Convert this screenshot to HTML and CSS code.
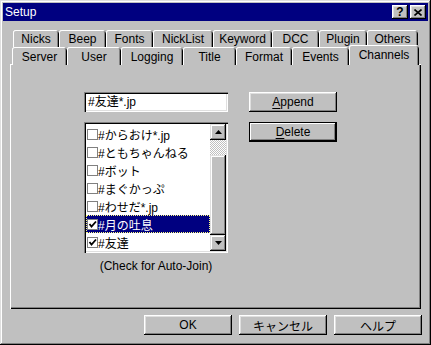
FILE: index.html
```html
<!DOCTYPE html>
<html lang="ja">
<head>
    <meta charset="UTF-8">
    <meta name="viewport" content="width=device-width, initial-scale=1.0">
    <title>Setup</title>
    <link rel="stylesheet" href="styles.css">
</head>
<body>

    <div class="dialog">
        <div class="titlebar">
            <span class="title">Setup</span>
            <div class="caption-buttons">
                <button class="cap-btn cap-help">?</button>
                <button class="cap-btn cap-close">
                    <svg width="8" height="7" viewBox="0 0 8 7"><path d="M0.5 0.5 L7.5 6.5 M7.5 0.5 L0.5 6.5" stroke="#000" stroke-width="1.6" fill="none"/></svg>
                </button>
            </div>
        </div>

        <div class="dialog-body">
            <div class="tabs">
                <div class="tab-row row-back">
                    <div class="tab">Nicks</div>
                    <div class="tab">Beep</div>
                    <div class="tab">Fonts</div>
                    <div class="tab">NickList</div>
                    <div class="tab">Keyword</div>
                    <div class="tab">DCC</div>
                    <div class="tab">Plugin</div>
                    <div class="tab">Others</div>
                </div>
                <div class="tab-row row-front">
                    <div class="tab">Server</div>
                    <div class="tab">User</div>
                    <div class="tab">Logging</div>
                    <div class="tab">Title</div>
                    <div class="tab">Format</div>
                    <div class="tab">Events</div>
                    <div class="tab active">Channels</div>
                </div>
            </div>

            <div class="panel">
                <div class="channel-col">
                    <div class="field">#友達*.jp</div>

                    <div class="listbox">
                        <ul class="items">
                            <li class="item"><span class="check"></span>#からおけ*.jp</li>
                            <li class="item"><span class="check"></span>#ともちゃんねる</li>
                            <li class="item"><span class="check"></span>#ボット</li>
                            <li class="item"><span class="check"></span>#まぐかっぷ</li>
                            <li class="item"><span class="check"></span>#わせだ*.jp</li>
                            <li class="item selected"><span class="check checked"><svg width="9" height="9" viewBox="0 0 9 9"><path d="M1.5 4 L3.5 6.5 L8 1.5" stroke="#000" stroke-width="1.8" fill="none"/></svg></span>#月の吐息</li>
                            <li class="item"><span class="check checked"><svg width="9" height="9" viewBox="0 0 9 9"><path d="M1.5 4 L3.5 6.5 L8 1.5" stroke="#000" stroke-width="1.8" fill="none"/></svg></span>#友達</li>
                        </ul>
                        <div class="scrollbar">
                            <div class="sb-btn">
                                <svg width="7" height="4" viewBox="0 0 7 4"><polygon points="3.5,0 7,4 0,4" fill="#000"/></svg>
                            </div>
                            <div class="sb-track"></div>
                            <div class="sb-thumb"></div>
                            <div class="sb-btn">
                                <svg width="7" height="4" viewBox="0 0 7 4"><polygon points="0,0 7,0 3.5,4" fill="#000"/></svg>
                            </div>
                        </div>
                    </div>

                    <div class="hint">(Check for Auto-Join)</div>
                </div>

                <div class="button-col">
                    <button class="btn"><u>A</u>ppend</button>
                    <button class="btn default"><u>D</u>elete</button>
                </div>
            </div>

            <div class="actions">
                <button class="btn">OK</button>
                <button class="btn">キャンセル</button>
                <button class="btn">ヘルプ</button>
            </div>
        </div>
    </div>

</body>
</html>
```

FILE: styles.css
```css
body {
    margin: 0;
    background-color: #c0c0c0;
    font-family: "Liberation Sans", "Noto Sans CJK JP", sans-serif;
    font-size: 12px;
    color: #000;
}
button {
    font: inherit;
    color: #000;
    border: none;
    padding: 0;
    background-color: #c0c0c0;
}
u { text-decoration-thickness: 1px; text-underline-offset: 2px; }

.dialog {
    width: 431px;
    height: 345px;
    box-sizing: border-box;
    padding: 3px;
    background-color: #c0c0c0;
    box-shadow: inset -1px -1px #000, inset 1px 1px #dfdfdf, inset -2px -2px #808080, inset 2px 2px #fff;
}

/* title bar */
.titlebar {
    height: 18px;
    background-color: #000080;
    display: flex;
    align-items: center;
    justify-content: space-between;
    padding: 0 2px;
}
.title { color: #fff; line-height: 18px; }
.caption-buttons { display: flex; gap: 2px; }
.cap-btn {
    width: 16px;
    height: 14px;
    display: flex;
    align-items: center;
    justify-content: center;
    box-shadow: inset -1px -1px #000, inset 1px 1px #fff, inset -2px -2px #808080, inset 2px 2px #dfdfdf;
}
.cap-help { font-weight: bold; font-size: 12px; line-height: 14px; }

/* tabs */
.dialog-body { padding: 0 7px; }
.tabs { margin-top: 9px; }
.tab-row {
    display: grid;
    height: 17px;
}
.row-back {
    padding-left: 3px;
    grid-template-columns: 46px 47px 47px 60px 59px 47px 48px 51px;
}
.row-front {
    padding-left: 2px;
    grid-template-columns: 55px 54px 62px 53px 56px 57px 68px;
}
.tab {
    display: flex;
    align-items: center;
    justify-content: center;
    padding-top: 1px;
    border-radius: 3px 3px 0 0;
    background-color: #c0c0c0;
    box-shadow: inset 1px 0 #fff, inset 0 1px #fff, inset -1px 0 #000, inset -2px 0 #808080;
}
.tab.active {
    position: relative;
    z-index: 1;
    height: 20px;
    margin: -2px -2px 0 0;
    padding-top: 0;
    align-items: flex-start;
    padding-top: 3px;
    box-sizing: border-box;
}

/* panel */
.panel {
    height: 245px;
    box-sizing: border-box;
    padding: 28px 0 0 74px;
    display: flex;
    gap: 21px;
    box-shadow: inset 1px 1px #fff, inset -1px -1px #000, inset -2px -2px #808080;
}
.channel-col {
    width: 144px;
    display: flex;
    flex-direction: column;
}
.field {
    height: 20px;
    line-height: 20px;
    padding: 0 4px;
    background-color: #fff;
    box-shadow: inset 1px 1px #808080, inset 2px 2px #000, inset -1px -1px #fff, inset -2px -2px #dfdfdf;
}
.listbox {
    margin-top: 10px;
    height: 131px;
    box-sizing: border-box;
    padding: 2px;
    display: flex;
    background-color: #fff;
    box-shadow: inset 1px 1px #808080, inset 2px 2px #000, inset -1px -1px #fff, inset -2px -2px #dfdfdf;
}
.items {
    flex: 1;
    list-style: none;
    margin: 0;
    padding: 1px 0 0;
}
.item {
    height: 18px;
    display: flex;
    align-items: center;
    white-space: nowrap;
    overflow: hidden;
}
.item.selected {
    background-color: #000080;
    color: #fff;
    outline: 1px dotted #ffff80;
    outline-offset: -1px;
}
.check {
    width: 11px;
    height: 11px;
    box-sizing: border-box;
    margin: 0 0 0 1px;
    border: 1px solid #808080;
    background-color: #fff;
    display: flex;
    align-items: center;
    justify-content: center;
}

/* scrollbar */
.scrollbar {
    width: 16px;
    display: flex;
    flex-direction: column;
}
.sb-btn, .sb-thumb {
    background-color: #c0c0c0;
    box-shadow: inset -1px -1px #000, inset 1px 1px #dfdfdf, inset -2px -2px #808080, inset 2px 2px #fff;
}
.sb-btn {
    height: 16px;
    display: flex;
    align-items: center;
    justify-content: center;
}
.sb-track {
    height: 15px;
    background: repeating-conic-gradient(#fff 0 25%, #c0c0c0 0 50%) 0 0 / 2px 2px;
}
.sb-thumb { flex: 1; }

.hint {
    margin-top: 6px;
    text-align: center;
}

/* buttons */
.button-col {
    display: flex;
    flex-direction: column;
    gap: 10px;
}
.btn {
    width: 88px;
    height: 20px;
    box-shadow: inset -1px -1px #000, inset 1px 1px #fff, inset -2px -2px #808080, inset 2px 2px #dfdfdf;
}
.btn.default {
    box-shadow: inset 0 0 0 1px #000, inset -2px -2px #000, inset 2px 2px #fff, inset -3px -3px #808080;
}
.actions {
    margin: 6px -1px 0 0;
    display: flex;
    justify-content: flex-end;
    gap: 7px;
}
```
